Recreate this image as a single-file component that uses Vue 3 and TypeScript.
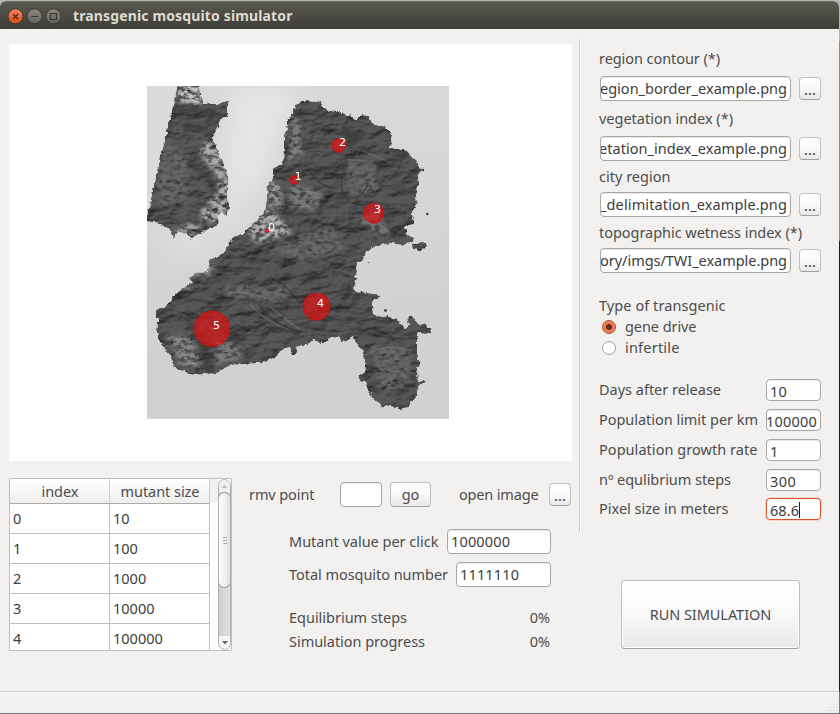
<script setup lang="ts">
import { ref } from 'vue'

interface FileField { label: string; width: number; path: string; pathWidth: number }
interface NumberField { label: string; width: number; value: string; valueWidth: number; kind: string }
interface Release { x: number; y: number; r: number; tx: number; ty: number }

/* Spreads the letters of a caption so that it fills its allotted width. */
const vFit = {
  mounted(el: HTMLElement, binding: { value: number }) {
    const count = (el.textContent || '').trim().length
    const natural = el.getBoundingClientRect().width
    if (count > 1) el.style.letterSpacing = `${(binding.value - natural) / (count - 0.5)}px`
  },
}

const files: FileField[] = [
  { label: 'region contour (*)', width: 121, path: 'egion_border_example.png', pathWidth: 187 },
  { label: 'vegetation index (*)', width: 134, path: 'etation_index_example.png', pathWidth: 188 },
  { label: 'city region', width: 71.5, path: '_delimitation_example.png', pathWidth: 187 },
  { label: 'topographic wetness index (*)', width: 203, path: 'ory/imgs/TWI_example.png', pathWidth: 187 },
]

const numbers: NumberField[] = [
  { label: 'Days after release', width: 122, value: '10', valueWidth: 17, kind: '' },
  { label: 'Population limit per km', width: 159, value: '100000', valueWidth: 51, kind: 'tight' },
  { label: 'Population growth rate', width: 158.5, value: '1', valueWidth: 8, kind: '' },
  { label: 'nº equlibrium steps', width: 132, value: '300', valueWidth: 26, kind: '' },
  { label: 'Pixel size in meters', width: 129.5, value: '68.6', valueWidth: 29, kind: 'focus' },
]

const rows: string[] = ['10', '100', '1000', '10000', '100000']

const releases: Release[] = [
  { x: 267, y: 230.5, r: 1.7, tx: 268, ty: 231 },
  { x: 294, y: 180, r: 4, tx: 294.5, ty: 180 },
  { x: 338.5, y: 145.5, r: 6.5, tx: 339, ty: 146 },
  { x: 373.7, y: 213.3, r: 9.7, tx: 374, ty: 213 },
  { x: 316.5, y: 306.7, r: 13.3, tx: 317, ty: 307 },
  { x: 212, y: 328.7, r: 17.3, tx: 213, ty: 329 },
]

const mode = ref<string>('gene drive')

const westLand = '178,84 199,84 200,95 203,104 210,103 218,105 220,102 229,101 227,108 227,117 222,119 217,130 212,139 217,145 218,153 223,162 225,170 229,178 227,190 227,198 230,208 226,216 220,211 217,217 220,223 212,228 202,232 190,239 189,235 178,232 173,238 172,232 160,223 145,221 148,212 175,97'
const mainLand = '225,250 233,238 243,233 255,222 265,212 267,197 268,182 273,180 273,168 283,163 284,143 287,123 293,113 295,106 303,101 320,102 328,111 340,112 347,116 351,114 353,119 362,116 370,117 372,123 385,127 393,135 390,148 405,150 412,157 418,163 419,168 424,169 418,175 419,183 416,195 417,203 412,213 414,223 404,227 408,235 415,239 411,243 403,245 390,243 373,247 365,253 364,260 357,262 355,277 358,279 354,282 355,292 370,293 377,293 378,298 372,303 373,315 387,316 397,320 405,328 409,325 407,318 412,316 418,325 425,323 427,327 432,330 428,334 417,333 417,358 421,363 417,368 418,382 427,380 418,387 416,397 408,407 400,409 390,406 383,407 378,402 373,398 368,390 365,383 358,377 365,372 366,363 362,350 357,345 353,337 342,343 339,336 333,338 320,344 313,339 310,343 297,348 295,355 292,354 290,346 283,348 277,357 260,363 230,365 217,373 193,375 175,368 170,355 160,343 157,333 158,320 155,310 165,307 177,293 183,288 193,283 189,278 195,273 208,272 210,260 223,253'
</script>

<template>
  <div class="desktop">
    <div class="window">
      <header class="titlebar">
        <svg class="controls" width="60" height="28" viewBox="0 0 60 28">
          <defs>
            <linearGradient id="closeFill" x1="0" y1="0" x2="0" y2="1">
              <stop offset="0" stop-color="#f58660" /><stop offset="1" stop-color="#df4a1c" />
            </linearGradient>
            <linearGradient id="greyFill" x1="0" y1="0" x2="0" y2="1">
              <stop offset="0" stop-color="#8a8880" /><stop offset="1" stop-color="#63625b" />
            </linearGradient>
          </defs>
          <circle cx="11.5" cy="14.3" r="7.5" fill="url(#closeFill)" stroke="#393832" />
          <circle cx="30.5" cy="14.3" r="7.5" fill="url(#greyFill)" stroke="#393832" />
          <circle cx="49.5" cy="14.3" r="7.5" fill="url(#greyFill)" stroke="#393832" />
          <path d="M9 12l5 5M14 12l-5 5" stroke="#4a2a1c" stroke-width="1.3" />
          <path d="M27.5 14.5h6.5" stroke="#393832" stroke-width="1.2" />
          <rect x="46.5" y="11.5" width="6" height="6" fill="none" stroke="#393832" stroke-width="1.2" />
        </svg>
        <h1><span v-fit="219.5">transgenic mosquito simulator</span></h1>
      </header>

      <main class="body">
        <section class="left">
          <div class="canvas">
            <svg class="map" width="302" height="333" viewBox="147 86 302 333">
              <defs>
                <linearGradient id="sea" x1="0" y1="0" x2="0.15" y2="1">
                  <stop offset="0" stop-color="#d8d8d8" /><stop offset="0.45" stop-color="#d6d6d6" />
                  <stop offset="0.8" stop-color="#d1d1d1" /><stop offset="1" stop-color="#d1d1d1" />
                </linearGradient>
                <filter id="haze" x="-30%" y="-30%" width="160%" height="160%"><feGaussianBlur stdDeviation="12" /></filter>
                <filter id="terrain" filterUnits="userSpaceOnUse" x="140" y="80" width="315" height="345" color-interpolation-filters="sRGB">
                  <feTurbulence type="fractalNoise" baseFrequency="0.22" numOctaves="3" seed="4" result="edgeNoise" />
                  <feDisplacementMap in="SourceGraphic" in2="edgeNoise" scale="5" xChannelSelector="R" yChannelSelector="G" result="shape" />
                  <feTurbulence type="fractalNoise" baseFrequency="0.04 0.07" numOctaves="5" seed="11" result="relief" />
                  <feDiffuseLighting in="relief" surfaceScale="3.6" diffuseConstant="1.15" lighting-color="#ffffff" result="lit">
                    <feDistantLight azimuth="235" elevation="50" />
                  </feDiffuseLighting>
                  <feComposite in="shape" in2="lit" operator="arithmetic" k1="1" k2="0.12" k3="0" k4="0" result="shaded" />
                  <feComposite in="shaded" in2="shape" operator="in" />
                </filter>
                <filter id="speckle" filterUnits="userSpaceOnUse" x="140" y="80" width="315" height="345" color-interpolation-filters="sRGB">
                  <feGaussianBlur in="SourceGraphic" stdDeviation="2" result="soft" />
                  <feTurbulence type="fractalNoise" baseFrequency="0.16 0.24" numOctaves="3" seed="7" />
                  <feColorMatrix type="matrix" values="0 0 0 0 1  0 0 0 0 1  0 0 0 0 1  4 0 0 0 -1.4" result="mask" />
                  <feComposite in="soft" in2="mask" operator="in" />
                </filter>
                <filter id="soften" x="-10%" y="-10%" width="120%" height="120%"><feGaussianBlur stdDeviation="0.9" /></filter>
                <clipPath id="landClip">
                  <polygon :points="westLand" /><polygon :points="mainLand" />
                </clipPath>
              </defs>
              <rect x="147" y="86" width="302" height="333" fill="url(#sea)" />
              <path d="M208 86H300L285 120 265 175 230 225 190 255 160 240 200 235Q240 210 222 150L232 96Z" fill="#e5e5e5" filter="url(#haze)" />
              <path d="M147 86H178L147 217Z" fill="#dadada" />
              <g filter="url(#terrain)">
                <polygon :points="westLand" fill="#505050" />
                <polygon :points="mainLand" fill="#4e4e4e" />
                <path d="M412 244L427 243 421 251 413 249Z" fill="#484848" />
              </g>
              <g clip-path="url(#landClip)">
                <g filter="url(#speckle)">
                  <path d="M178 84H200L203 106 194 104 177 102Z" fill="#c4c4c4" />
                  <path d="M206 140L216 145 225 170 229 180 227 214 216 223 200 220 201 210 218 192 217 176 198 152Z" fill="#acacac" />
                  <path d="M174 230L192 222 203 227 190 237Z" fill="#a0a0a0" />
                  <path d="M247 231L269 208 282 220 292 234 270 240 256 243Z" fill="#b0b0b0" />
                  <path d="M270 180L280 184 283 207 267 207Z" fill="#999" />
                  <path d="M290 115L300 118 303 155 288 165Z" fill="#7d7d7d" />
                  <path d="M177 287L190 290 193 275 208 278 215 263 205 262 187 275Z" fill="#8c8c8c" />
                  <path d="M166 335L192 336 202 367 180 367Z" fill="#858585" />
                  <path d="M215 340L247 345 243 358 215 365Z" fill="#7d7d7d" />
                  <path d="M290 182L326 192 314 212 288 205Z" fill="#767676" />
                  <path d="M165 140L188 155 187 200 160 210 156 180Z" fill="#676767" />
                  <path d="M222 284L292 286 285 300 227 298ZM268 250L330 225 350 250 300 262ZM370 345L412 350 408 385 380 395ZM345 160L375 165 380 190 350 200Z" fill="#686868" />
                  <path d="M360 222L372 208 390 230 385 240Z" fill="#757575" />
                </g>
                <g fill="none" stroke-linecap="round">
                  <path d="M190 324Q201 331 204 353L210 374M228 331Q240 343 248 356M346 128L350 144 362 135M193 165L207 176 214 190M183 110L212 112 205 130 186 125" stroke="#2f2f2f" stroke-opacity=".4" stroke-width="7" filter="url(#soften)" />
                  <path d="M291 191Q308 191 322 194M289 206Q306 208 319 204M231 292Q254 292 277 302M270 307Q286 319 300 330M342 160Q362 158 376 166M357 149Q373 154 389 162M370 210Q385 219 389 235M366 355Q382 344 404 349M169 337Q178 340 184 338M251 305Q268 324 288 329M198 312L217 335" stroke="#aaa" stroke-opacity=".28" stroke-width="1.2" />
                  <path d="M259 305Q275 327 300 331M272 278Q289 286 298 302M347 167Q335 186 347 197Q363 200 368 183M310 171Q316 184 331 188M365 330Q381 341 393 334" stroke="#292929" stroke-opacity=".45" stroke-width="1.4" />
                </g>
              </g>
              <circle cx="427.3" cy="214" r="1.3" fill="#444" /><circle cx="385.5" cy="310.5" r="1.4" fill="#444" />
              <circle cx="390.5" cy="310.5" r=".6" fill="#777" /><circle cx="368.5" cy="262.5" r=".8" fill="#777" />
              <g v-for="(p, i) in releases" :key="i">
                <circle :cx="p.x" :cy="p.y" :r="p.r" fill="#e51212" fill-opacity=".67" stroke="#d90d0f" stroke-opacity=".8" stroke-width="1.3" />
                <text :x="p.tx" :y="p.ty" class="mark">{{ i }}</text>
              </g>
            </svg>
          </div>

          <div class="lower">
            <div class="table">
              <div class="grid">
                <div class="th"><span v-fit="37">index</span></div>
                <div class="th"><span v-fit="79">mutant size</span></div>
                <template v-for="(size, i) in rows" :key="size">
                  <div class="td">{{ i }}</div>
                  <div class="td">{{ size }}</div>
                </template>
              </div>
              <div class="corner"></div>
              <div class="scroll">
                <div class="arrow"><svg width="5" height="3"><path d="M0 3L2.5 0 5 3Z" fill="#b5b4b2" /></svg></div>
                <div class="thumb"><i></i><i></i><i></i></div>
                <div class="arrow down"><svg width="6" height="4"><path d="M0 0H6L3 3.5Z" fill="#666" /></svg></div>
              </div>
            </div>

            <div class="controls-area">
              <div class="tools">
                <label class="rmv"><span v-fit="65.5">rmv point</span></label>
                <div class="field remove"></div>
                <button class="btn go">go</button>
                <label class="open"><span v-fit="79.5">open image</span></label>
                <button class="btn dots">...</button>
              </div>
              <div class="entry first">
                <label><span v-fit="149.5">Mutant value per click</span></label>
                <div class="field"><span v-fit="59">1000000</span></div>
              </div>
              <div class="entry second">
                <label><span v-fit="159">Total mosquito number</span></label>
                <div class="field"><span v-fit="59">1111110</span></div>
              </div>
              <div class="progress">
                <label><span v-fit="118">Equilibrium steps</span></label><output>0%</output>
                <label><span v-fit="136">Simulation progress</span></label><output>0%</output>
              </div>
            </div>
          </div>
        </section>

        <div class="divider"></div>

        <aside class="right">
          <div v-for="f in files" :key="f.label" class="file">
            <label><span v-fit="f.width">{{ f.label }}</span></label>
            <div class="file-row">
              <div class="field path"><span v-fit="f.pathWidth">{{ f.path }}</span></div>
              <button class="btn dots">...</button>
            </div>
          </div>

          <div class="types">
            <div class="caption"><span v-fit="126.5">Type of transgenic</span></div>
            <div class="option" @click="mode = 'gene drive'">
              <i class="radio" :class="{ on: mode === 'gene drive' }"></i><label><span v-fit="71.5">gene drive</span></label>
            </div>
            <div class="option" @click="mode = 'infertile'">
              <i class="radio" :class="{ on: mode === 'infertile' }"></i><label><span v-fit="54.5">infertile</span></label>
            </div>
          </div>

          <div class="numbers">
            <div v-for="n in numbers" :key="n.label" class="number">
              <label><span v-fit="n.width">{{ n.label }}</span></label>
              <div class="field" :class="n.kind"><span v-fit="n.valueWidth">{{ n.value }}</span></div>
            </div>
          </div>

          <button class="btn run"><span v-fit="121.5">RUN SIMULATION</span></button>
        </aside>
      </main>

      <footer class="status">
        <svg width="13" height="13" viewBox="0 0 13 13">
          <g fill="#c9c8c6">
            <path d="M10 1h1v1h-1zM7 4h1v1h-1zM10 4h1v1h-1zM4 7h1v1h-1zM7 7h1v1h-1zM10 7h1v1h-1zM1 10h1v1h-1zM4 10h1v1h-1zM7 10h1v1h-1zM10 10h1v1h-1z" />
          </g>
        </svg>
      </footer>
    </div>
  </div>
</template>

<style>
body {
  margin: 0;
  overflow: hidden;
}
</style>

<style scoped>
* {
  box-sizing: border-box;
}

.desktop {
  width: 840px;
  height: 714px;
  padding: 1px 1px 1px 0;
  background: linear-gradient(#b4b5b6 0 40px, #8e8b86 42px 240px, #1c1b1f 242px 690px, #77757a 692px);
  font-family: 'Noto Sans', 'Open Sans', sans-serif;
  font-size: 14.5px;
  line-height: 18px;
  color: #4c4c4c;
}

.window {
  display: flex;
  flex-direction: column;
  width: 839px;
  height: 712px;
  background: #f2f1f0;
  border-radius: 6px 6px 0 0;
  overflow: hidden;
}

span {
  white-space: pre;
}

.titlebar {
  display: flex;
  align-items: center;
  gap: 9px;
  height: 28px;
  padding-left: 4px;
  background: linear-gradient(#5a594f, #3d3c37);
  border-top: 1px solid #6a695f;
}

.titlebar h1 {
  margin: 0;
  font-size: 14px;
  font-weight: 700;
  color: #dfdbd2;
}

.body {
  display: flex;
  height: 662px;
  padding-left: 9px;
}

.left {
  width: 563px;
  padding-top: 15px;
}

.canvas {
  height: 417px;
  padding: 42px 0 0 138px;
  background: #fff;
}

.map {
  display: block;
}

.mark {
  font: 11px 'DejaVu Sans', sans-serif;
  fill: #fff;
}

.lower {
  display: flex;
  padding-top: 17px;
}

.table {
  display: flex;
  width: 223px;
  height: 173px;
  border: 1px solid #bfbebc;
  border-radius: 1px;
  background: #fff;
  overflow: hidden;
}

.grid {
  display: grid;
  grid-template-columns: 100px 100px;
  grid-template-rows: 25px repeat(5, 30px);
  width: 200px;
}

.th {
  display: flex;
  align-items: center;
  justify-content: center;
  background: linear-gradient(#fff, #efeeed);
  border-right: 1px solid #d0cfcd;
  border-bottom: 1px solid #aaa9a7;
  padding-left: 1px;
}

.td {
  display: flex;
  align-items: center;
  padding: 0 0 1px 3px;
  border-right: 1px solid #c0c0c0;
  border-bottom: 1px solid #c0c0c0;
  color: #3c3c3c;
}

.corner {
  width: 8px;
  height: 24px;
  background: #f2f1f0;
}

.scroll {
  display: flex;
  flex-direction: column;
  width: 13px;
  height: 171px;
  border: 1px solid #b3b2b0;
  border-radius: 7px;
  background: linear-gradient(90deg, #cfcecc, #e0dfdd);
  overflow: hidden;
}

.arrow {
  display: flex;
  align-items: center;
  justify-content: center;
  flex: none;
  height: 12px;
  background: #f0efee;
}

.arrow svg {
  display: block;
}

.arrow.down {
  height: 13px;
  margin-top: auto;
  border-radius: 0 0 6px 6px;
  background: #f6f5f4;
}

.thumb {
  display: flex;
  flex-direction: column;
  align-items: center;
  justify-content: center;
  gap: 2px;
  width: 13px;
  height: 96px;
  margin-left: -1px;
  border: 1px solid #979694;
  border-radius: 7px;
  background: linear-gradient(90deg, #fff, #efeeed 60%, #dddcda);
}

.thumb i {
  width: 4px;
  height: 1px;
  background: #aaa9a7;
}

.field {
  display: flex;
  align-items: center;
  padding: 0 0 1px 3px;
  height: 25px;
  border: 1px solid #a9a6a2;
  border-radius: 4px;
  background: #fff;
  color: #3c3c3c;
  overflow: hidden;
  box-shadow: inset 0 1px 0 #eceae8;
}

.btn {
  display: flex;
  align-items: center;
  justify-content: center;
  flex: none;
  padding: 0 0 2px;
  border: 1px solid #c1bfbc;
  border-bottom-color: #a3a19e;
  border-radius: 4px;
  background: linear-gradient(#fff, #fafafa 45%, #e9e8e7);
  font: inherit;
  color: #4c4c4c;
}

.dots {
  width: 22px;
  height: 23px;
  padding: 0;
  font-weight: 500;
}

.controls-area {
  padding-left: 17px;
}

.tools {
  display: flex;
  align-items: center;
  height: 33px;
}

.rmv,
.open,
.entry label,
.number label {
  padding-bottom: 2px;
}

.rmv {
  width: 91px;
}

.remove {
  width: 42px;
  margin-right: 8px;
}

.go {
  width: 41px;
  height: 25px;
  margin-right: 28px;
}

.open {
  width: 90px;
}

.entry {
  display: flex;
  align-items: center;
  justify-content: space-between;
  width: 262px;
  margin-left: 40px;
}

.entry.first {
  margin-top: 18px;
}

.entry.second {
  margin-top: 8px;
}

.entry .field {
  width: 104px;
}

.entry.second .field {
  width: 95px;
}

.progress {
  display: grid;
  grid-template-columns: 1fr auto;
  row-gap: 6px;
  width: 261px;
  margin: 21px 0 0 40px;
}

.divider {
  width: 2px;
  height: 492px;
  margin: 10px 18px 0 7px;
  border-left: 1px solid #c4c3c1;
  border-right: 1px solid #fff;
}

.right {
  width: 222px;
  padding-top: 20px;
}

.file label {
  display: block;
  height: 18px;
}

.file-row {
  display: flex;
  align-items: center;
  gap: 8px;
  margin: 9px 0 8px;
}

.file:nth-child(2) .file-row {
  margin-bottom: 6px;
}

.file:nth-child(3) .file-row,
.file:nth-child(4) .file-row {
  margin: 7px 0 6px;
}

.path {
  width: 191px;
  margin-left: 1px;
  padding: 0 3px 1px 0;
  justify-content: flex-end;
}

.types {
  padding-top: 17px;
}

.caption {
  height: 20px;
}

.option {
  display: flex;
  align-items: center;
  height: 21px;
  gap: 9px;
  padding-left: 3px;
}

.option label {
  height: 20px;
}

.radio {
  width: 14px;
  height: 14px;
  border: 1px solid #9e9c99;
  border-radius: 50%;
  background: #fff;
}

.radio.on {
  border-color: #a5492c;
  background: radial-gradient(circle, #63301f 0 2.6px, #f0784e 3.4px 5px, #f49a78 6px);
}

.numbers {
  display: flex;
  flex-direction: column;
  gap: 8px;
  padding-top: 21px;
}

.number {
  display: flex;
  align-items: center;
  justify-content: space-between;
  height: 22px;
}

.number:last-child {
  margin-top: -1px;
}

.number label {
  width: 160px;
}

.number .field {
  width: 55px;
  height: 22px;
  padding: 1px 0 0 3px;
}

.number .field.tight {
  padding-left: 0;
}

.number .field.tight span {
  margin-left: -1px;
}

.number .field.focus {
  border-color: #d4532a;
  box-shadow: 0 0 0 1px #f3d5ca;
}

.field.focus::after {
  content: '';
  width: 1px;
  height: 16px;
  background: #222;
}

.run {
  width: 179px;
  height: 69px;
  margin: 60px 0 0 22px;
  box-shadow: inset 0 0 0 1px #fff;
}

.status {
  display: flex;
  justify-content: flex-end;
  align-items: flex-end;
  height: 22px;
  border-top: 1px solid #d0cfcd;
  box-shadow: inset 0 1px 0 #fff;
}
</style>
